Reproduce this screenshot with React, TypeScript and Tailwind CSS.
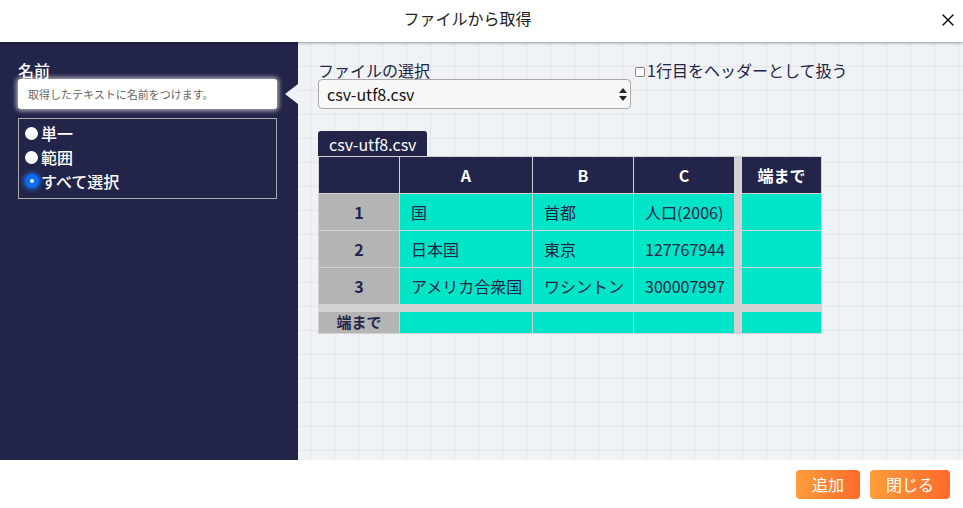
import { X } from "lucide-react";

const rows = [
  { n: "1", a: "国", b: "首都", c: "人口(2006)" },
  { n: "2", a: "日本国", b: "東京", c: "127767944" },
  { n: "3", a: "アメリカ合衆国", b: "ワシントン", c: "300007997" },
];

const navy = "bg-[#232449]";

function Radio({ label, checked }: { label: string; checked?: boolean }) {
  return (
    <label className="flex items-center h-[24px] pl-[6px] text-white text-[16px] font-medium">
      {checked ? (
        <span className="w-[14px] h-[14px] rounded-full bg-[#0b6cf2] shadow-[0_0_4px_2px_rgba(30,120,255,0.7)] flex items-center justify-center mr-[2px]">
          <span className="w-[4px] h-[4px] rounded-full bg-white" />
        </span>
      ) : (
        <span className="w-[13px] h-[13px] rounded-full bg-white mr-[3px]" />
      )}
      {label}
    </label>
  );
}

export default function App() {
  return (
    <div className="w-[963px] h-[508px] flex flex-col bg-white font-['Noto_Sans_CJK_JP','Noto_Sans',sans-serif] overflow-hidden">
      {/* Header */}
      <div className="relative z-10 h-[42px] shrink-0 flex items-center justify-center pr-[28px] bg-white shadow-[0_1px_3px_rgba(0,0,0,0.35)]">
        <span className="text-[16px] text-[#222] pb-[6px]">ファイルから取得</span>
        <X className="absolute right-[5px] top-[10px] text-[#111]" size={20} strokeWidth={1.8} />
      </div>

      {/* Body */}
      <div className="flex flex-1 min-h-0">
        {/* Left panel */}
        <div className={`relative w-[298px] shrink-0 ${navy} pl-[18px] pr-[21px] pt-[19px]`}>
          <div className="text-white text-[16px] font-medium leading-[18px]">名前</div>
          <div className="h-[30px] rounded-[3px] bg-white shadow-[0_0_4px_2px_rgba(255,255,255,0.6)] flex items-center pl-[10px] text-[11px] text-[#666]">
            取得したテキストに名前をつけます。
          </div>
          <div className="mt-[9px] h-[81px] border border-[#aaa] pt-[2px]">
            <Radio label="単一" />
            <Radio label="範囲" />
            <Radio label="すべて選択" checked />
          </div>
          <div className="absolute right-0 top-[42px] w-0 h-0 border-y-[10px] border-y-transparent border-r-[13px] border-r-[#f0f3f5]" />
        </div>

        {/* Right panel */}
        <div className="flex-1 bg-[#f0f3f5] bg-[linear-gradient(to_right,#e2e6e9_1px,transparent_1px),linear-gradient(to_bottom,#e2e6e9_1px,transparent_1px)] bg-[length:24px_24px] bg-[position:12px_0px] pl-[20px] pt-[19px]">
          <div className="flex">
            <div className="w-[313px]">
              <div className="text-[#232449] text-[16px] leading-[18px]">ファイルの選択</div>
              <div className="relative h-[30px] rounded-[4px] border border-[#aaa] bg-[#f8f8f8] flex items-center pl-[8px] text-[16px] text-[#111]">
                csv-utf8.csv
                <svg className="absolute right-[3px] top-[8px]" width="8" height="13" viewBox="0 0 8 13">
                  <path d="M4 0 L8 5 L0 5 Z" fill="#222" />
                  <path d="M0 8 L8 8 L4 13 Z" fill="#222" />
                </svg>
              </div>
            </div>
            <label className="flex items-start ml-[4px] text-[#232449] text-[16px] leading-[18px]">
              <span className="w-[10px] h-[10px] mt-[6px] mr-[2px] border border-[#888] rounded-[2px] bg-white" />
              1行目をヘッダーとして扱う
            </label>
          </div>

          <div className="mt-[22px]">
            <div className={`inline-flex items-center h-[25px] px-[11px] rounded-t-[3px] ${navy} text-white text-[16px]`}>
              csv-utf8.csv
            </div>
            <div className="grid w-[504px] grid-cols-[80px_132px_100px_100px_6px_79px] grid-rows-[36px_36px_36px_36px_6px_21px] gap-px p-px bg-[#d2d2d2] text-[16px]">
              <div className={navy} />
              {["A", "B", "C"].map((h) => (
                <div key={h} className={`${navy} flex items-center justify-center text-white font-bold`}>
                  {h}
                </div>
              ))}
              <div />
              <div className={`${navy} flex items-center justify-center text-white font-bold`}>端まで</div>

              {rows.map((r) => (
                <div key={r.n} className="contents">
                  <div className="bg-[#b4b4b4] flex items-center justify-center text-[#232449] font-bold">{r.n}</div>
                  <div className="bg-[#00e4c8] flex items-center pl-[11px] text-[#232449]">{r.a}</div>
                  <div className="bg-[#00e4c8] flex items-center pl-[11px] text-[#232449]">{r.b}</div>
                  <div className="bg-[#00e4c8] flex items-center pl-[11px] text-[#232449]">{r.c}</div>
                  <div />
                  <div className="bg-[#00e4c8]" />
                </div>
              ))}

              <div className="col-span-6" />

              <div className="bg-[#b4b4b4] flex items-center justify-center text-[#232449] font-bold text-[15px]">端まで</div>
              <div className="bg-[#00e4c8]" />
              <div className="bg-[#00e4c8]" />
              <div className="bg-[#00e4c8]" />
              <div />
              <div className="bg-[#00e4c8]" />
            </div>
          </div>
        </div>
      </div>

      {/* Footer */}
      <div className="h-[48px] shrink-0 flex items-center justify-end gap-[10px] pr-[13px] bg-white">
        <button className="w-[64px] h-[29px] rounded-[4px] bg-[linear-gradient(to_right,#fd9d3a,#ff6a2b)] text-white text-[16px]">
          追加
        </button>
        <button className="w-[80px] h-[29px] rounded-[4px] bg-[linear-gradient(to_right,#fd9d3a,#ff6a2b)] text-white text-[16px]">
          閉じる
        </button>
      </div>
    </div>
  );
}
